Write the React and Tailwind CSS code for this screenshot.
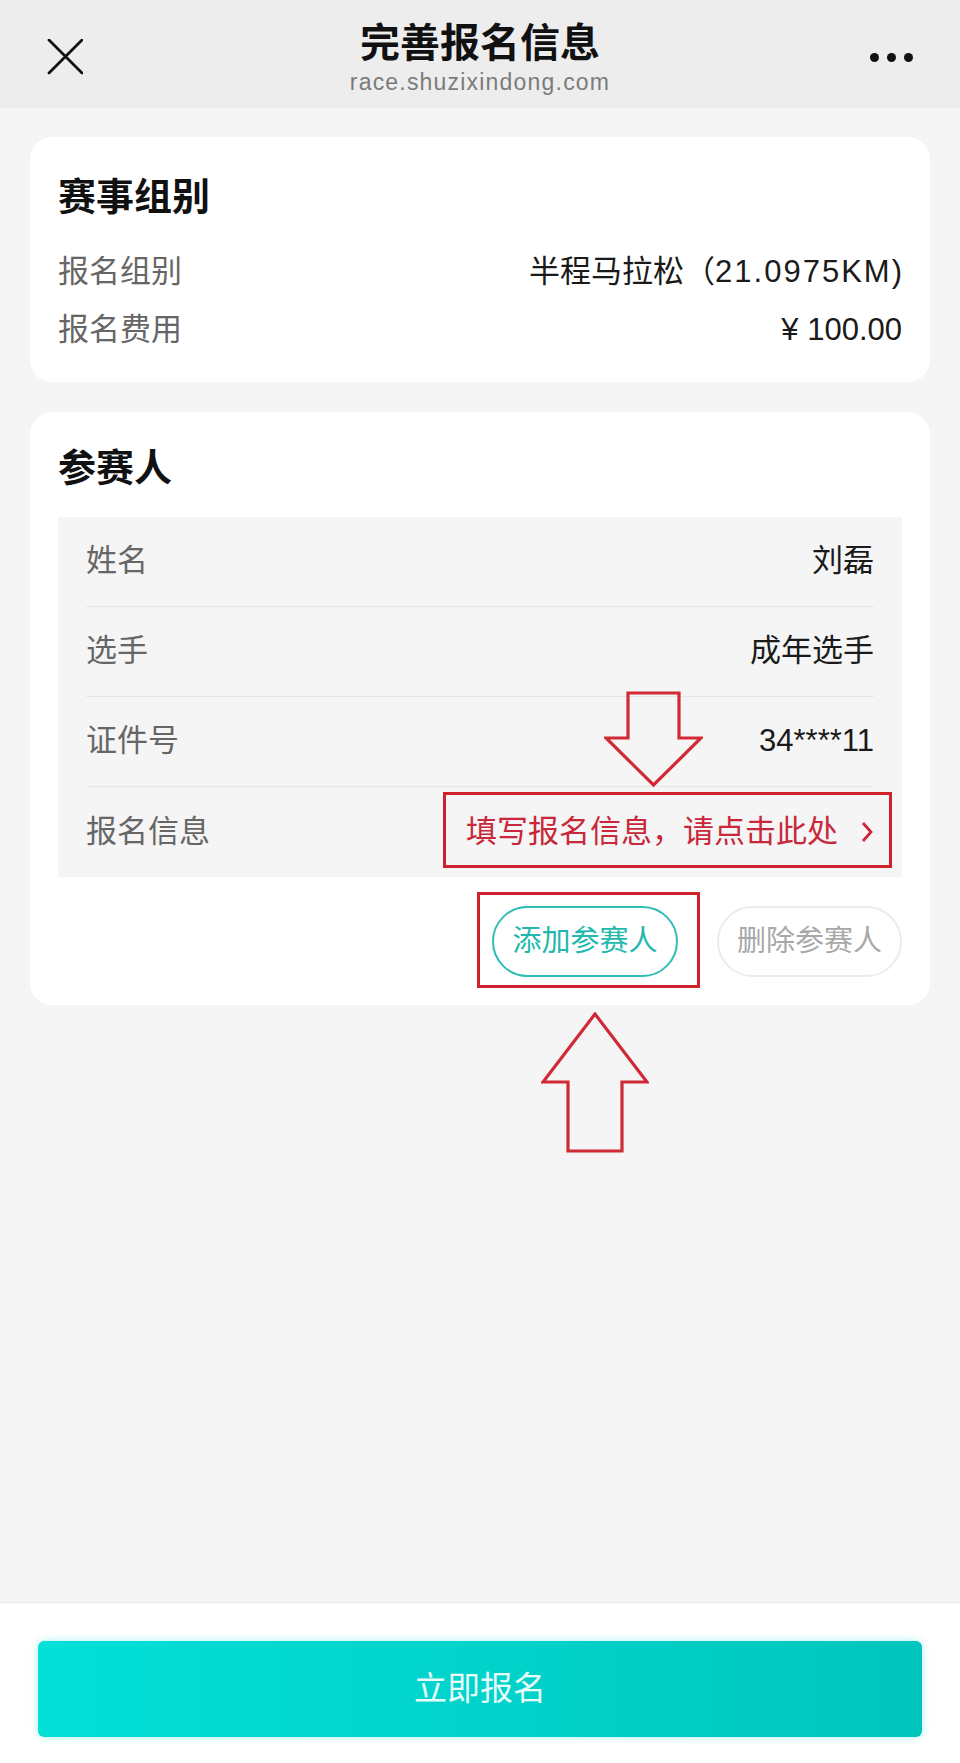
import React from 'react';

const font = "font-['Liberation_Sans','Noto_Sans_CJK_SC',sans-serif]";

const DownArrow = () => (
  <svg width="99" height="97" viewBox="-1 -1 99 97" className="absolute left-[574px] top-[279px]">
    <polygon points="23,1 74,1 74,46 96,46 48.5,93 1,46 23,46" fill="none" stroke="#d02a36" strokeWidth="3.2" strokeLinejoin="miter" />
  </svg>
);

const UpArrow = () => (
  <svg width="108" height="141" viewBox="-1 -1 108 141" className="absolute left-[511px] top-[600px]">
    <polygon points="53,1 105,69 80,69 80,138 26,138 26,69 1,69" fill="none" stroke="#d02a36" strokeWidth="3.2" strokeLinejoin="miter" />
  </svg>
);

const InfoRow = ({ label, value, last }) => (
  <div className={last ? 'flex h-[90px] items-center justify-between' : 'flex h-[90px] items-center justify-between border-b border-[#e6e6e6]'}>
    <span className="text-[31px] text-[#666]">{label}</span>
    <span className="text-[31px] text-[#1a1a1a]">{value}</span>
  </div>
);

export default function App() {
  return (
    <div className={`${font} flex min-h-[1763px] w-[960px] flex-col bg-[#f5f5f5]`}>
      {/* 顶部导航 */}
      <div className="grid h-[108px] grid-cols-[1fr_auto_1fr] items-center bg-[#ededed] px-[47px]">
        <div className="mt-[6px] flex">
          <svg width="36" height="36" viewBox="0 0 36 36">
            <path d="M2 1 L35 34 M35 1 L2 34" stroke="#111" strokeWidth="2.8" strokeLinecap="round" />
          </svg>
        </div>
        <div className="mt-[8px] flex flex-col items-center">
          <div className="text-[40px] leading-[44px] font-semibold text-[#111]">完善报名信息</div>
          <div className="mt-[4px] text-[23px] leading-[26px] tracking-[1.2px] text-[#7b7b7b]">race.shuzixindong.com</div>
        </div>
        <div className="mt-[6px] flex justify-end gap-[8px]">
          <span className="h-[9px] w-[9px] rounded-full bg-[#111]" />
          <span className="h-[9px] w-[9px] rounded-full bg-[#111]" />
          <span className="h-[9px] w-[9px] rounded-full bg-[#111]" />
        </div>
      </div>

      <div className="flex-1 px-[30px] pt-[29px]">
        {/* 赛事组别 */}
        <div className="rounded-[22px] bg-white px-[28px] pt-[35px] pb-[23px]">
          <div className="h-[50px] text-[38px] leading-[50px] font-bold text-[#111]">赛事组别</div>
          <div className="mt-[21px] flex h-[58px] items-center justify-between">
            <span className="text-[31px] text-[#666]">报名组别</span>
            <span className="text-[31px] text-[#1a1a1a]">
              半程马拉松（<span className="tracking-[2px]">21.0975KM</span>)
            </span>
          </div>
          <div className="flex h-[58px] items-center justify-between">
            <span className="text-[31px] text-[#666]">报名费用</span>
            <span className="text-[31px] text-[#1a1a1a]">¥ 100.00</span>
          </div>
        </div>

        {/* 参赛人 */}
        <div className="relative mt-[30px] rounded-[22px] bg-white px-[28px] pt-[31px] pb-[28px]">
          <div className="h-[50px] text-[38px] leading-[50px] font-bold text-[#111]">参赛人</div>
          <div className="mt-[24px] bg-[#f5f5f5] px-[28px]">
            <InfoRow label="姓名" value="刘磊" />
            <InfoRow label="选手" value="成年选手" />
            <InfoRow label="证件号" value="34****11" />
            <div className="flex h-[90px] items-center justify-between">
              <span className="text-[31px] text-[#666]">报名信息</span>
              <span className="relative flex items-center text-[31px] leading-[44px] text-[#c8283a]">
                填写报名信息，请点击此处
                <svg width="14" height="22" viewBox="0 0 14 22" className="ml-[22px]">
                  <path d="M3 2 L11 11 L3 20" fill="none" stroke="#c8283a" strokeWidth="2.8" />
                </svg>
                <span className="absolute -left-[23px] -right-[18px] -top-[18px] -bottom-[14px] border-[3px] border-[#d0202e]" />
              </span>
            </div>
          </div>
          <div className="mt-[29px] flex justify-end gap-[39px]">
            <div className="relative">
              <button className="flex h-[71px] w-[186px] items-center justify-center rounded-full border-[2.5px] border-[#2fbdb4] text-[29px] text-[#22b8ae]">
                添加参赛人
              </button>
              <span className="absolute -left-[15px] -right-[22px] -top-[14px] -bottom-[11px] border-[3px] border-[#d0202e]" />
            </div>
            <button className="flex h-[71px] w-[185px] items-center justify-center rounded-full border-[2px] border-[#ececec] text-[29px] text-[#a8a8a8]">
              删除参赛人
            </button>
          </div>
          <DownArrow />
          <UpArrow />
        </div>
      </div>

      {/* 底部按钮 */}
      <div className="border-t border-[#e8e8e8] bg-white px-[38px] pt-[38px] pb-[26px]">
        <button className="flex h-[96px] w-full items-center justify-center rounded-[6px] bg-gradient-to-r from-[#02e0d8] to-[#00c6bd] text-[33px] text-white/90 shadow-[0_0_8px_rgba(0,220,210,0.35)]">
          立即报名
        </button>
      </div>
    </div>
  );
}
